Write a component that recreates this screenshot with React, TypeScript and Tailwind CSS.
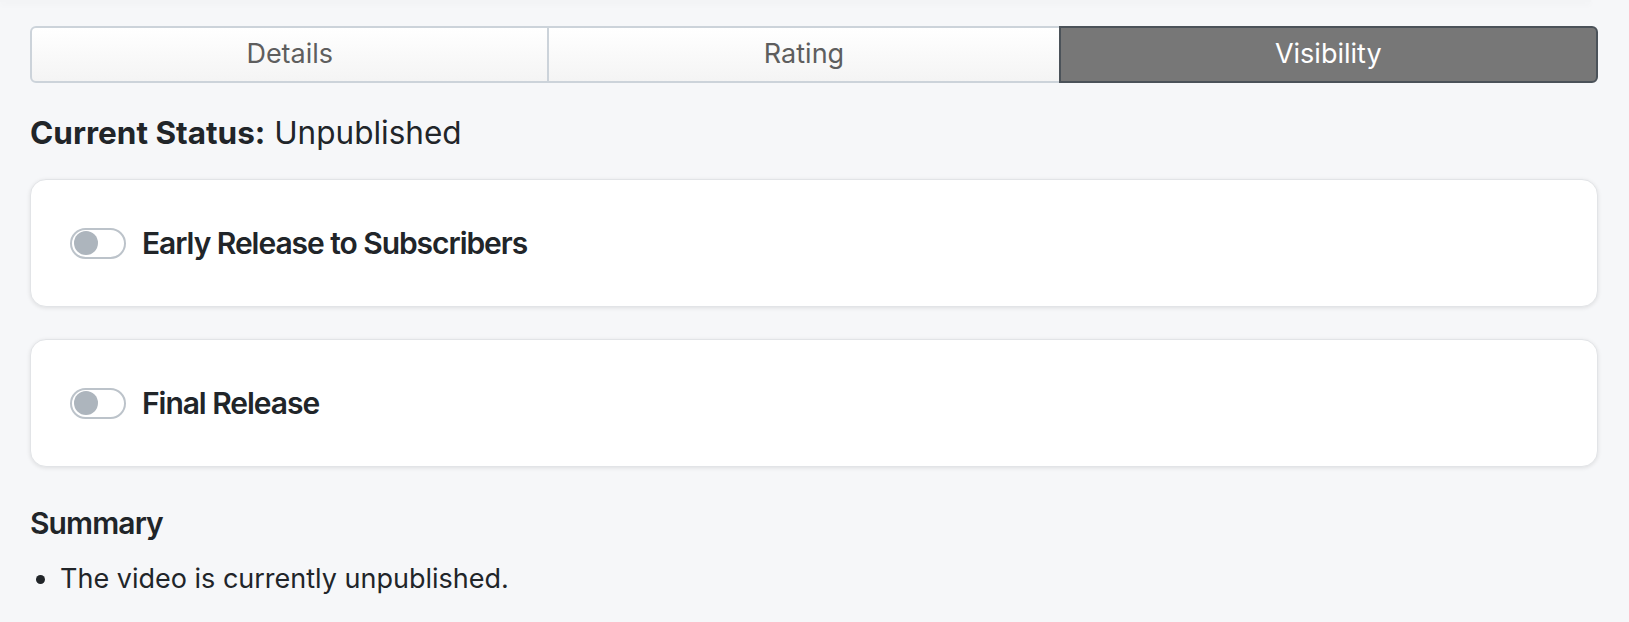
import React from 'react';

const tabs = ['Details', 'Rating', 'Visibility'];

const Toggle: React.FC = () => (
  <div className="w-[56px] h-[31px] rounded-full border-2 border-[#bcc3ca] bg-white flex items-center pl-[2px] shrink-0">
    <div className="w-[24px] h-[24px] rounded-full bg-[#adb5bd]" />
  </div>
);

const ReleaseCard: React.FC<{ label: string }> = ({ label }) => (
  <div className="h-[128px] bg-white rounded-[16px] border border-[#e2e4e7] shadow-[0_1px_4px_rgba(0,0,0,0.10)] flex items-center pl-[39px] gap-[16px]">
    <Toggle />
    <span className="text-[30px] font-semibold tracking-[-0.035em] text-[#212529]">{label}</span>
  </div>
);

const App: React.FC = () => {
  const active = 'Visibility';

  return (
    <div className="min-h-screen bg-[#f6f7f9] font-['Inter',sans-serif] text-[#212529]">
      <div className="h-[2px] mr-[38px] bg-[#f3f4f6] shadow-[0_2px_6px_rgba(0,0,0,0.05)]" />

      <div className="pl-[30px] pr-[31px] pt-[24px]">
        <div className="flex h-[57px]">
          <button className="flex-auto flex items-center justify-center border-2 border-[#ccd3da] rounded-l-[6px] bg-gradient-to-b from-white to-[#f4f4f4] text-[27px] text-[#5e5e5e]">
            {tabs[0]}
          </button>
          <button className="flex-auto flex items-center justify-center border-y-2 border-[#ccd3da] bg-gradient-to-b from-white to-[#f4f4f4] text-[27px] text-[#5e5e5e]">
            {tabs[1]}
          </button>
          <button className="flex-auto flex items-center justify-center border-2 border-[#4b5259] rounded-r-[6px] bg-[#777777] text-[27px] text-white">
            {active}
          </button>
        </div>

        <p className="mt-[27px] text-[31.5px] leading-[45px]">
          <span className="font-bold">Current Status:</span> Unpublished
        </p>

        <div className="mt-[24px] flex flex-col gap-[32px]">
          <ReleaseCard label="Early Release to Subscribers" />
          <ReleaseCard label="Final Release" />
        </div>

        <h3 className="mt-[38px] text-[30px] leading-[36px] font-semibold tracking-[-0.03em]">Summary</h3>

        <ul className="mt-[18px]">
          <li className="flex items-center text-[27px] leading-[40px]">
            <span className="w-[9px] h-[9px] rounded-full bg-[#212529] ml-[6px] mr-[15px]" />
            The video is currently unpublished.
          </li>
        </ul>
      </div>
    </div>
  );
};

export default App;
